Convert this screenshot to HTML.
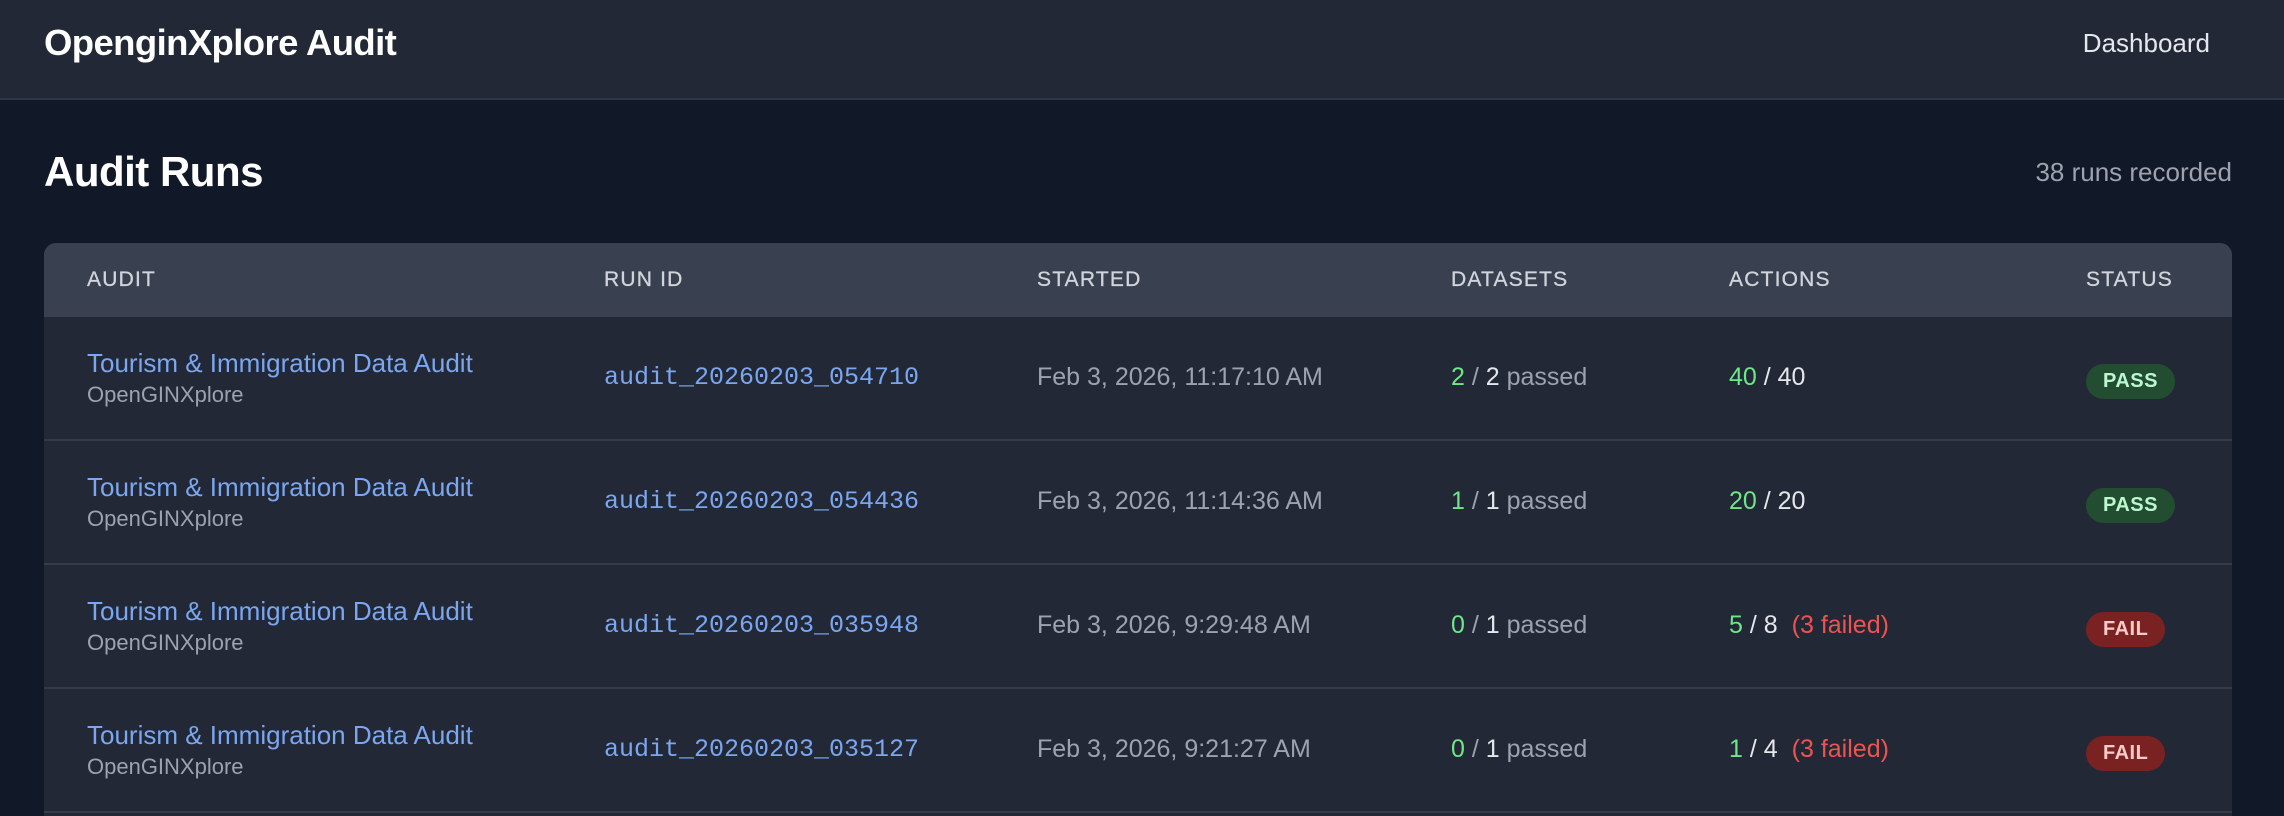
<!DOCTYPE html>
<html><head><meta charset="utf-8"><style>
*{margin:0;padding:0;box-sizing:border-box}
html{width:2284px;height:816px;overflow:hidden}
body{width:2284px;height:816px;overflow:hidden;background:#111827;font-family:"Liberation Sans",sans-serif;color:#e5e7eb;position:relative}
.nav{height:100px;border-bottom:2px solid #2f3744;position:relative;background:#222836}
.nav .t{position:absolute;left:44px;top:22px;font-size:36.5px;font-weight:bold;color:#fff;letter-spacing:-0.6px}
.nav .d{position:absolute;right:74px;top:28px;font-size:26px;color:#e5e7eb}
h1{position:absolute;left:44px;top:148px;font-size:42px;font-weight:bold;color:#fff;letter-spacing:-0.5px}
.cnt{position:absolute;right:52px;top:157px;font-size:26px;color:#9ca3af}
.tbl{position:absolute;left:44px;top:243px;width:2188px;height:573px;background:#222836;border-radius:12px 12px 0 0;overflow:hidden}
.hd{height:74px;background:#394150;position:relative}
.hd span{position:absolute;top:25px;font-size:21px;letter-spacing:1.2px;color:#d1d5db;font-weight:500;-webkit-text-stroke:0.3px #d1d5db}
.row{height:124px;border-bottom:2px solid #343b49;position:relative}
.row>*{position:absolute}
.a1{left:43px;top:31px;font-size:26px;color:#7aa7f0}
.a2{left:43px;top:65px;font-size:22px;color:#9ca3af}
.rid{left:560px;top:46px;font-family:"Liberation Mono",monospace;font-size:25px;color:#7aa7f0}
.dt{left:993px;top:46px;font-size:25px;color:#9ca3af}
.ds{left:1407px;top:46px;font-size:25px;color:#9ca3af}
.ac{left:1685px;top:46px;font-size:25px;color:#e5e7eb}
.g{color:#6ee787}.w{color:#e5e7eb}.r{color:#ef5350;margin-left:14px}
.b{left:2042px;top:47px;height:35px;border-radius:18px;padding:0 17px;font-size:20px;font-weight:bold;line-height:35px;letter-spacing:0.5px}
.p{background:#234d30;color:#bbf7d0}.f{background:#7a2222;color:#fecaca}
</style></head><body>
<div class="nav"><div class="t">OpenginXplore Audit</div><div class="d">Dashboard</div></div>
<h1>Audit Runs</h1><div class="cnt">38 runs recorded</div>
<div class="tbl">
<div class="hd"><span style="left:43px">AUDIT</span><span style="left:560px">RUN ID</span><span style="left:993px">STARTED</span><span style="left:1407px">DATASETS</span><span style="left:1685px">ACTIONS</span><span style="left:2042px">STATUS</span></div>
<div class="row"><div class="a1">Tourism &amp; Immigration Data Audit</div><div class="a2">OpenGINXplore</div><div class="rid">audit_20260203_054710</div><div class="dt">Feb 3, 2026, 11:17:10 AM</div><div class="ds"><span class="g">2</span> / <span class="w">2</span> passed</div><div class="ac"><span class="g">40</span> / 40</div><div class="b p">PASS</div></div>
<div class="row"><div class="a1">Tourism &amp; Immigration Data Audit</div><div class="a2">OpenGINXplore</div><div class="rid">audit_20260203_054436</div><div class="dt">Feb 3, 2026, 11:14:36 AM</div><div class="ds"><span class="g">1</span> / <span class="w">1</span> passed</div><div class="ac"><span class="g">20</span> / 20</div><div class="b p">PASS</div></div>
<div class="row"><div class="a1">Tourism &amp; Immigration Data Audit</div><div class="a2">OpenGINXplore</div><div class="rid">audit_20260203_035948</div><div class="dt">Feb 3, 2026, 9:29:48 AM</div><div class="ds"><span class="g">0</span> / <span class="w">1</span> passed</div><div class="ac"><span class="g">5</span> / 8<span class="r">(3 failed)</span></div><div class="b f">FAIL</div></div>
<div class="row"><div class="a1">Tourism &amp; Immigration Data Audit</div><div class="a2">OpenGINXplore</div><div class="rid">audit_20260203_035127</div><div class="dt">Feb 3, 2026, 9:21:27 AM</div><div class="ds"><span class="g">0</span> / <span class="w">1</span> passed</div><div class="ac"><span class="g">1</span> / 4<span class="r">(3 failed)</span></div><div class="b f">FAIL</div></div>
</div>
</body></html>
